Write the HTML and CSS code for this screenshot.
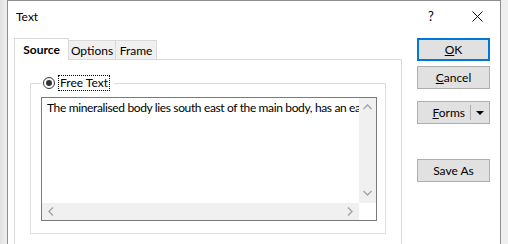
FILE: index.html
```html
<!DOCTYPE html>
<html lang="en">
<head>
  <meta charset="UTF-8" />
  <title>Text</title>
  <link rel="stylesheet" href="styles.css">
</head>
<body>
  <div class="window">
    <!-- Title bar -->
    <div class="titlebar">
      <span class="title">Text</span>
      <span class="help-btn">?</span>
      <span class="close-btn">
        <svg width="11" height="11" viewBox="0 0 11 11">
          <path d="M0.5 0.5 L10.5 10.5 M10.5 0.5 L0.5 10.5" stroke="#111" stroke-width="1" fill="none" />
        </svg>
      </span>
    </div>

    <div class="content">
      <!-- Tab control -->
      <div class="tabs">
        <div class="tab-strip">
          <div class="tab tab-active">Source</div>
          <div class="tab tab-options">Options</div>
          <div class="tab tab-frame">Frame</div>
        </div>
        <div class="tab-page">
          <fieldset class="group">
            <legend class="group-legend">
              <span class="radio"><span class="radio-dot"></span></span>
              <span class="focus-label">Free Text</span>
            </legend>
            <div class="textbox">
              <div class="textbox-top">
                <div class="text-area">The mineralised body lies south east of the main body, has an east-west strike</div>
                <div class="vscroll">
                  <svg width="9" height="6" viewBox="0 0 9 6"><polyline points="0.5,5 4.5,1 8.5,5" stroke="#a6a6a6" stroke-width="1.5" fill="none" /></svg>
                  <svg width="9" height="6" viewBox="0 0 9 6"><polyline points="0.5,1 4.5,5 8.5,1" stroke="#a6a6a6" stroke-width="1.5" fill="none" /></svg>
                </div>
              </div>
              <div class="textbox-bottom">
                <div class="hscroll">
                  <svg width="6" height="9" viewBox="0 0 6 9"><polyline points="5,0.5 1,4.5 5,8.5" stroke="#a6a6a6" stroke-width="1.5" fill="none" /></svg>
                  <svg width="6" height="9" viewBox="0 0 6 9"><polyline points="1,0.5 5,4.5 1,8.5" stroke="#a6a6a6" stroke-width="1.5" fill="none" /></svg>
                </div>
                <div class="scroll-corner"></div>
              </div>
            </div>
          </fieldset>
        </div>
      </div>

      <!-- Buttons -->
      <div class="buttons">
        <div class="btn btn-default"><span class="mnemonic">OK</span></div>
        <div class="btn btn-cancel"><span class="mnemonic">Cancel</span></div>
        <div class="btn btn-forms">
          <span class="mnemonic">Forms</span>
          <span class="split-divider"></span>
          <span class="split-arrow"></span>
        </div>
        <div class="btn btn-save">Save As</div>
      </div>
    </div>
  </div>
</body>
</html>
```

FILE: styles.css
```css
* {
  box-sizing: border-box;
  margin: 0;
  padding: 0;
}

body {
  background: linear-gradient(to right, #e2e2e2, #efefef 7px);
  width: 508px;
  height: 244px;
  overflow: hidden;
  font-family: "Lato", "Liberation Sans", sans-serif;
  font-size: 12px;
  color: #000;
}

.window {
  margin-left: 7px;
  width: 494px;
  height: 244px;
  overflow: hidden;
  background: #fff;
  border: 1px solid #8f8f8f;
  border-bottom: none;
}

/* Title bar */
.titlebar {
  height: 30px;
  display: flex;
  align-items: center;
  padding-left: 8px;
}

.title {
  flex: 1;
}

.help-btn {
  width: 46px;
  text-align: center;
  font-size: 13px;
}

.close-btn {
  width: 46px;
  height: 30px;
  display: flex;
  align-items: center;
  justify-content: center;
}

/* Content */
.content {
  display: flex;
  padding: 7px 0 0 6px;
}

.tabs {
  width: 388px;
}

.tab-strip {
  height: 21px;
  display: flex;
  align-items: flex-end;
}

.tab {
  height: 19px;
  border: 1px solid #d9d9d9;
  border-bottom: none;
  background: #f0f0f0;
  display: flex;
  align-items: center;
  justify-content: center;
  margin-left: -1px;
}

.tab-active {
  width: 55px;
  height: 22px;
  margin-left: 0;
  margin-bottom: -1px;
  background: #fff;
  font-weight: bold;
  position: relative;
  z-index: 1;
}

.tab-options {
  width: 48px;
}

.tab-frame {
  width: 42px;
}

.tab-page {
  height: 186px;
  border: 1px solid #d9d9d9;
  border-bottom: none;
  padding: 15px 0 0 15px;
}

/* Group box with radio legend */
.group {
  width: 356px;
  border: 1px solid #dcdcdc;
  padding: 6px 0 12px 10px;
  min-inline-size: 0;
}

.group-legend {
  height: 16px;
  display: flex;
  align-items: center;
  padding: 0 4px 0 2px;
}

.radio {
  width: 12px;
  height: 12px;
  border: 1px solid #333;
  border-radius: 50%;
  display: flex;
  align-items: center;
  justify-content: center;
  margin-right: 3px;
}

.radio-dot {
  width: 6px;
  height: 6px;
  border-radius: 50%;
  background: #333;
}

.focus-label {
  border: 1px dotted #000;
  padding: 0 1px;
  line-height: 14px;
}

/* Text box */
.textbox {
  width: 336px;
  height: 124px;
  border: 1px solid #7a7a7a;
  display: flex;
  flex-direction: column;
}

.textbox-top {
  flex: 1;
  display: flex;
  min-height: 0;
}

.text-area {
  flex: 1;
  padding: 2px 0 0 5px;
  line-height: 16px;
  letter-spacing: -0.36px;
  white-space: nowrap;
  overflow: hidden;
}

.vscroll {
  width: 17px;
  background: #f0f0f0;
  display: flex;
  flex-direction: column;
  justify-content: space-between;
  align-items: center;
  padding: 6px 0 7px;
}

.textbox-bottom {
  height: 17px;
  display: flex;
}

.hscroll {
  flex: 1;
  background: #f0f0f0;
  display: flex;
  justify-content: space-between;
  align-items: center;
  padding: 0 6px;
}

.scroll-corner {
  width: 17px;
  background: #fff;
}

/* Buttons */
.buttons {
  margin-left: 15px;
  width: 73px;
  display: flex;
  flex-direction: column;
}

.btn {
  height: 23px;
  background: #e1e1e1;
  border: 1px solid #adadad;
  display: flex;
  align-items: center;
  justify-content: center;
}

.mnemonic::first-letter {
  text-decoration: underline;
}

.btn-default {
  border: 2px solid #0078d7;
}

.btn-cancel {
  margin-top: 5px;
}

.btn-forms {
  margin-top: 12px;
  justify-content: flex-end;
  padding-right: 5px;
}

.split-divider {
  width: 1px;
  height: 15px;
  background: #adadad;
  margin: 0 5px;
}

.split-arrow {
  width: 0;
  height: 0;
  border-left: 4px solid transparent;
  border-right: 4px solid transparent;
  border-top: 4px solid #000;
}

.btn-save {
  margin-top: 35px;
}
```
